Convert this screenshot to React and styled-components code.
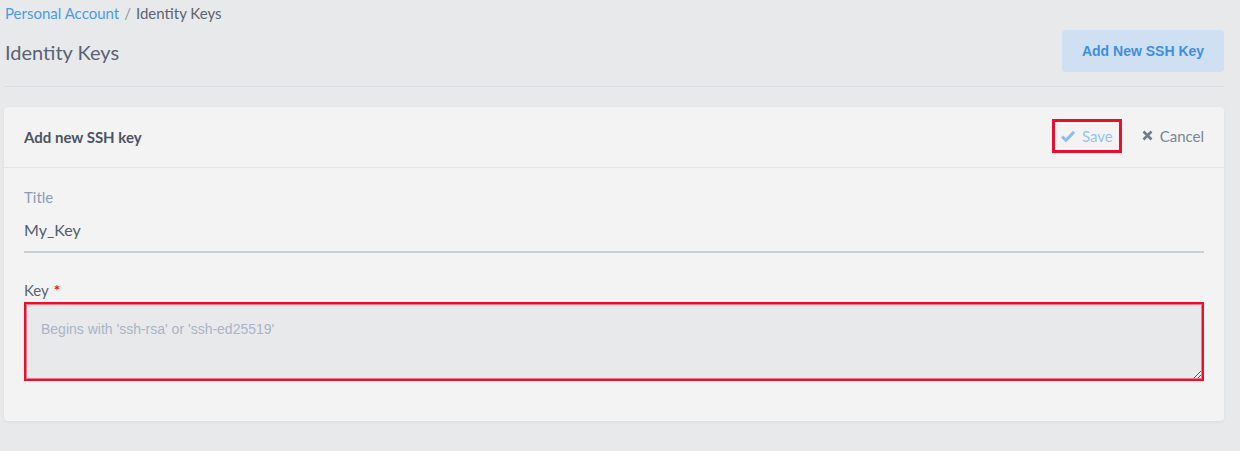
import styled, { createGlobalStyle } from "styled-components";

const GlobalStyle = createGlobalStyle`
  html, body {
    margin: 0;
    padding: 0;
    background: #e8e9eb;
    font-family: Lato, "Noto Sans", sans-serif;
  }
  * { box-sizing: border-box; }
`;

const Page = styled.div`
  padding: 0 16px 30px 4px;
`;

const Breadcrumb = styled.div`
  height: 27px;
  padding: 4px 0 0 1px;
  font-size: 15px;
  color: #5b6472;
`;

const Crumb = styled.a`
  color: #4a9ae8;
  text-decoration: none;
`;

const Sep = styled.span`
  color: #8c96a3;
  margin: 0 5px;
`;

const Header = styled.div`
  display: flex;
  align-items: center;
  justify-content: space-between;
  height: 60px;
  padding-bottom: 15px;
  border-bottom: 1px solid #dcdee2;
`;

const PageTitle = styled.h1`
  margin: 0;
  padding: 5px 0 0 1px;
  font-size: 20px;
  font-weight: 400;
  color: #596372;
`;

const AddButton = styled.button`
  width: 162px;
  height: 42px;
  margin-top: 4px;
  border: 0;
  border-radius: 4px;
  background: #cfe0f2;
  color: #3f8ee0;
  font-family: "Liberation Sans", Arial, sans-serif;
  font-weight: 700;
  font-size: 14px;
  cursor: pointer;
`;

const Card = styled.section`
  margin-top: 20px;
  background: #f3f3f3;
  border-radius: 4px;
  box-shadow: 0 1px 3px rgba(0, 0, 0, 0.06);
`;

const CardHeader = styled.div`
  display: flex;
  align-items: center;
  justify-content: space-between;
  height: 61px;
  padding: 0 20px;
  border-bottom: 1px solid #e4e5e7;
`;

const CardTitle = styled.h2`
  margin: 0;
  font-size: 15px;
  font-weight: 700;
  color: #4b5462;
`;

const Actions = styled.div`
  display: flex;
  align-items: center;
  gap: 20px;
  margin-bottom: 3px;
`;

const ActionButton = styled.button`
  display: flex;
  align-items: center;
  gap: 7px;
  height: 34px;
  padding: 0 ${(p) => (p.$boxed ? "6px" : "0")};
  border: ${(p) => (p.$boxed ? "3px solid #e8112d" : "0")};
  background: transparent;
  font-family: inherit;
  font-size: 15px;
  color: ${(p) => p.$color};
  cursor: pointer;
`;

const CardBody = styled.div`
  padding: 20px 20px 40px;
`;

const Field = styled.div`
  margin-bottom: ${(p) => p.$gap || "0"};
`;

const Label = styled.label`
  display: block;
  font-size: 15px;
  color: ${(p) => p.$color || "#8a9cb5"};
  margin-bottom: ${(p) => p.$mb || "6px"};
`;

const Required = styled.span`
  color: #e8112d;
  margin-left: 5px;
  font-size: 15px;
  font-weight: 700;
`;

const TextInput = styled.input`
  display: block;
  width: 100%;
  height: 39px;
  padding: 0 0 6px;
  border: 0;
  border-bottom: 2px solid #c8cfd6;
  background: transparent;
  font-family: inherit;
  font-size: 16px;
  color: #555e6b;
  outline: none;
`;

const KeyArea = styled.textarea`
  display: block;
  width: 100%;
  height: 79px;
  padding: 17px 15px 15px;
  border: 2px solid #e8112d;
  box-shadow: inset 0 0 0 1px #f07a89;
  background: #e8e9eb;
  font-family: "Liberation Sans", Arial, sans-serif;
  font-size: 14px;
  color: #4b5462;
  resize: vertical;
  outline: none;
  &::placeholder {
    color: #a8b5c6;
  }
`;

const Check = () => (
  <svg width="14" height="12" viewBox="0 0 14 12">
    <path d="M1 6.5 L5 10.3 L13 1.8" fill="none" stroke="#8dbdf0" strokeWidth="3" />
  </svg>
);

const Cross = () => (
  <svg width="11" height="11" viewBox="0 0 11 11">
    <path d="M1.5 1.5 L9.5 9.5 M9.5 1.5 L1.5 9.5" fill="none" stroke="#6f7a8a" strokeWidth="2.6" />
  </svg>
);

const App = () => (
  <>
    <GlobalStyle />
    <Page>
      <Breadcrumb>
        <Crumb href="#">Personal Account</Crumb>
        <Sep>/</Sep>
        Identity Keys
      </Breadcrumb>
      <Header>
        <PageTitle>Identity Keys</PageTitle>
        <AddButton>Add New SSH Key</AddButton>
      </Header>
      <Card>
        <CardHeader>
          <CardTitle>Add new SSH key</CardTitle>
          <Actions>
            <ActionButton $boxed $color="#94c3f3">
              <Check />
              Save
            </ActionButton>
            <ActionButton $color="#7b8594">
              <Cross />
              Cancel
            </ActionButton>
          </Actions>
        </CardHeader>
        <CardBody>
          <Field $gap="28px">
            <Label $mb="8px">Title</Label>
            <TextInput defaultValue="My_Key" />
          </Field>
          <Field>
            <Label $color="#5b6472" $mb="3px">
              Key<Required>*</Required>
            </Label>
            <KeyArea placeholder="Begins with 'ssh-rsa' or 'ssh-ed25519'" />
          </Field>
        </CardBody>
      </Card>
    </Page>
  </>
);

export default App;
